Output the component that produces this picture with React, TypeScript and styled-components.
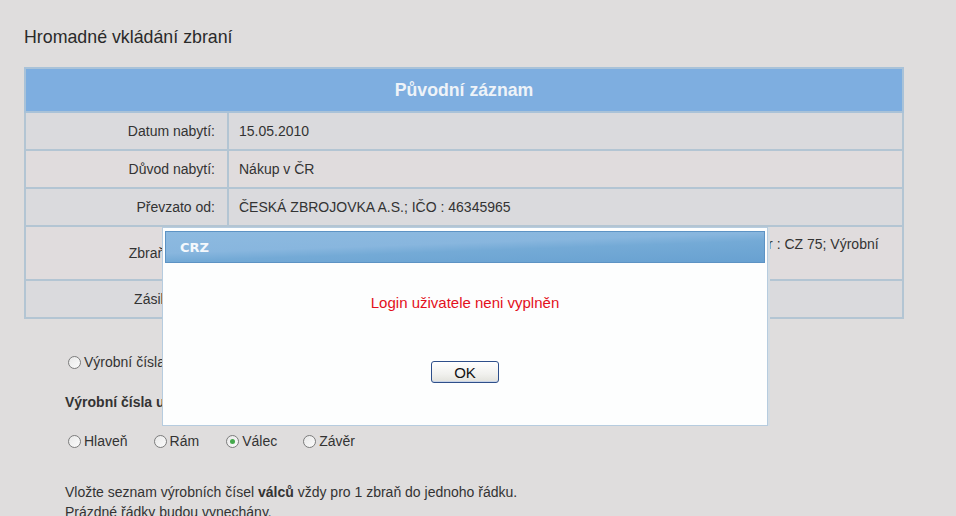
import React from "react";
import styled, { createGlobalStyle } from "styled-components";

const GlobalStyle = createGlobalStyle`
  html, body {
    margin: 0;
    padding: 0;
    background: #dfdddd;
    font-family: "Liberation Sans", Arial, sans-serif;
    color: #333;
  }
  body {
    width: 956px;
    height: 516px;
    overflow: hidden;
  }
`;

type Row = {
  label: string;
  value: string;
  tall?: boolean;
  alt?: boolean;
};

const rows: Row[] = [
  { label: "Datum nabytí:", value: "15.05.2010" },
  { label: "Důvod nabytí:", value: "Nákup v ČR", alt: true },
  { label: "Převzato od:", value: "ČESKÁ ZBROJOVKA A.S.; IČO : 46345965" },
  {
    label: "Zbraň - popis:",
    value:
      "Pistole;\u00a0 Kategorie : B; Ráže : 9 mm Luger; Výrobce : ČESKÁ ZBROJOVKA A.S.; Vzor : CZ 75; Výrobní číslo : A 123456",
    tall: true,
    alt: true,
  },
  { label: "Zásilka číslo:", value: "" },
];

const parts = ["Hlaveň", "Rám", "Válec", "Závěr"];

const App = () => {
  return (
    <Page>
      <GlobalStyle />
      <Title>Hromadné vkládání zbraní</Title>
      <Table>
        <thead>
          <tr>
            <HeadCell colSpan={2}>Původní záznam</HeadCell>
          </tr>
        </thead>
        <tbody>
          {rows.map((row) => (
            <BodyRow key={row.label} $tall={row.tall} $alt={row.alt}>
              <LabelCell>{row.label}</LabelCell>
              <ValueCell $top={row.tall}>{row.value}</ValueCell>
            </BodyRow>
          ))}
        </tbody>
      </Table>

      <Section>
        <RadioLine>
          <Radio />
          Výrobní čísla celých zbraní
        </RadioLine>
        <Heading>Výrobní čísla u jednotlivých hlavních částí</Heading>
        <RadioGroup>
          {parts.map((p) => (
            <RadioLine key={p}>
              <Radio $checked={p === "Válec"} />
              {p}
            </RadioLine>
          ))}
        </RadioGroup>
        <Hint>
          Vložte seznam výrobních čísel <b>válců</b> vždy pro 1 zbraň do jednoho řádku.
          <br />
          Prázdné řádky budou vynechány.
        </Hint>
      </Section>

      <Dialog>
        <DialogTitle>CRZ</DialogTitle>
        <DialogBody>
          <Message>Login uživatele neni vyplněn</Message>
          <OkButton>OK</OkButton>
        </DialogBody>
      </Dialog>
    </Page>
  );
};

export default App;

const Page = styled.div`
  position: relative;
  padding: 27px 0 0 24px;
  width: 932px;
  height: 489px;
`;

const Title = styled.h1`
  margin: 0 0 20px;
  font-size: 17.8px;
  font-weight: normal;
  line-height: 20px;
  color: #2a2a2a;
`;

const Table = styled.table`
  width: 880px;
  border-collapse: collapse;
  border: 2px solid #b0c3d2;
  font-size: 14px;
`;

const HeadCell = styled.th`
  height: 42px;
  padding: 0;
  background: #7eaee0;
  color: #eef3f8;
  font-size: 17.7px;
  font-weight: bold;
  text-align: center;
  border: 2px solid #a9c2d8;
`;

const BodyRow = styled.tr<{ $tall?: boolean; $alt?: boolean }>`
  height: ${(p) => (p.$tall ? "52px" : "38px")};
  background: ${(p) => (p.$alt ? "#e0dcdd" : "#dadadd")};
`;

const LabelCell = styled.td`
  width: 189px;
  padding: 0 12px 0 0;
  text-align: right;
  vertical-align: middle;
  border: 2px solid #b3c5d3;
`;

const ValueCell = styled.td<{ $top?: boolean }>`
  padding: ${(p) => (p.$top ? "8px 10px 8px 10px" : "0 10px")};
  vertical-align: ${(p) => (p.$top ? "top" : "middle")};
  line-height: 18px;
  border: 2px solid #b3c5d3;
`;

const Section = styled.div`
  padding: 33px 0 0 41px;
  font-size: 14px;
`;

const RadioLine = styled.label`
  display: flex;
  align-items: center;
  height: 20px;
  font-size: 14px;
`;

const Radio = styled.span<{ $checked?: boolean }>`
  position: relative;
  width: 13px;
  height: 13px;
  margin: 0 3px 0 3px;
  border: 1px solid #7c7c7c;
  border-radius: 50%;
  background: linear-gradient(135deg, #e8e8e8, #fbfbfb);
  box-sizing: border-box;

  &::after {
    content: "";
    display: ${(p) => (p.$checked ? "block" : "none")};
    position: absolute;
    left: 3px;
    top: 3px;
    width: 5px;
    height: 5px;
    border-radius: 50%;
    background: #45a94c;
  }
`;

const Heading = styled.div`
  margin-top: 20px;
  font-weight: bold;
  line-height: 20px;
`;

const RadioGroup = styled.div`
  display: flex;
  margin-top: 19px;

  & > label:nth-child(1) {
    margin-right: 23px;
  }
  & > label:nth-child(2) {
    margin-right: 24px;
  }
  & > label:nth-child(3) {
    margin-right: 23px;
  }
`;

const Hint = styled.p`
  margin: 31px 0 0;
  line-height: 20px;
`;

const Dialog = styled.div`
  position: absolute;
  left: 162px;
  top: 227px;
  width: 606px;
  height: 199px;
  padding: 3px 2px;
  box-sizing: border-box;
  background: #fdfefe;
  border: 1px solid #b6ccdf;
  box-shadow: 2px 0 0 #d6dde3;
`;

const DialogTitle = styled.div`
  height: 30px;
  padding-left: 14px;
  display: flex;
  align-items: center;
  border: 1px solid #5d93c4;
  background: linear-gradient(178deg, #8dbae0 0%, #88b6de 42%, #74aad6 58%, #68a1d1 100%);
  color: #f4f8fc;
  font-family: "DejaVu Sans", Verdana, sans-serif;
  font-weight: bold;
  font-size: 13px;
`;

const DialogBody = styled.div`
  display: flex;
  flex-direction: column;
  align-items: center;
`;

const Message = styled.div`
  margin-top: 31px;
  color: #e3101c;
  font-size: 15px;
  line-height: 18px;
`;

const OkButton = styled.button`
  margin-top: 49px;
  width: 68px;
  height: 22px;
  padding: 0;
  border: 1px solid #2e4f8a;
  border-radius: 3px;
  background: linear-gradient(#ffffff, #f1f1ee 60%, #e2e2dc);
  box-shadow: inset 0 -1px 0 #c8d4e8;
  font-family: "Liberation Sans", Arial, sans-serif;
  font-size: 15px;
  color: #111;
`;
